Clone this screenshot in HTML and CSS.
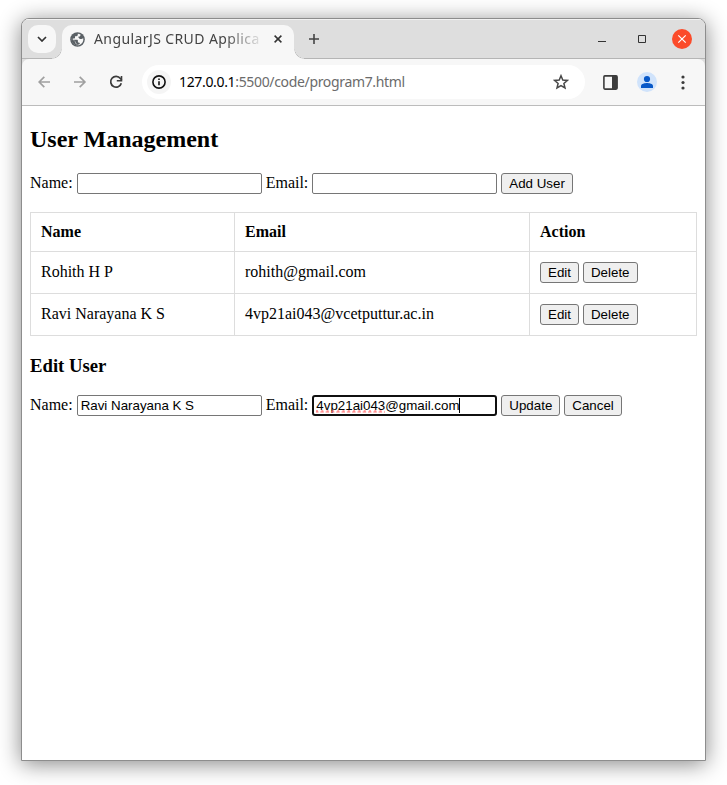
FILE: index.html
```html
<!DOCTYPE html>
<html lang="en">
<head>
<meta charset="utf-8">
<title>AngularJS CRUD Application</title>
<link rel="stylesheet" href="styles.css">
</head>
<body>
<div class="window">
  <header class="tabstrip">
    <div class="tab-search">
      <svg width="10" height="6" viewBox="0 0 10 6"><path d="M1 1l4 4 4-4" fill="none" stroke="#333" stroke-width="1.7"/></svg>
    </div>
    <div class="tab">
      <svg class="globe" width="15" height="15" viewBox="0 0 15 15"><circle cx="7.5" cy="7.5" r="7.3" fill="#5a6065"/><path d="M7.800 1.700v1.100c0 .8-.6 1.400-1.400 1.400H5v1.500c0 .4-.3.700-.7.700H2.900v1.400h4.300c.4 0 .7.300.7.700v2.100h.7c.7 0 1.200.4 1.400 1-.9.900-1.800 1.500-2.800 1.600v-1.200c-.8 0-1.400-.6-1.400-1.400v-.700L1.800 6.400C1.300 9.900 4 13.300 7.500 13.300c3.200 0 5.800-2.600 5.800-5.800 0-.4 0-.8-.1-1.200l-1.600.8H9.900L8.500 5.700V4.400h1.400l.8-1.700c-.9-.6-1.900-1-2.900-1z" fill="#f7f7f7"/><path d="M1.600 6.200L5.400 10v.700c0 .8.600 1.400 1.400 1.400v1.300C3 13 1 9.500 1.600 6.200z" fill="#5a6065"/></svg>
      <span class="tab-title">AngularJS CRUD Applica</span>
      <svg class="tab-close" width="8" height="8" viewBox="0 0 8 8"><path d="M.6.6l6.800 6.800M7.400.6L.6 7.400" stroke="#333" stroke-width="1.500"/></svg>
    </div>
    <svg class="new-tab" width="10" height="10" viewBox="0 0 10 10"><path d="M5 0v10M0 5h10" stroke="#444" stroke-width="1.600"/></svg>
    <div class="controls">
      <svg width="8" height="8" viewBox="0 0 8 8"><path d="M0 6.500h8" stroke="#333"/></svg>
      <svg width="8" height="8" viewBox="0 0 8 8"><path d="M.5.5h7v7h-7z" fill="none" stroke="#333"/></svg>
      <svg width="20" height="20" viewBox="0 0 20 20"><circle cx="10" cy="10" r="10" fill="#fb4b2a"/><path d="M6.300 6.300l7.400 7.400M13.700 6.300l-7.400 7.400" stroke="#fff" stroke-width="1.200"/></svg>
    </div>
  </header>
  <div class="toolbar-back">
  <nav class="toolbar">
    <svg class="back" width="13" height="12" viewBox="0 0 13 12"><path d="M12 6H1.300M6.300.8L1.100 6l5.200 5.200" fill="none" stroke="#a0a0a0" stroke-width="1.700"/></svg>
    <svg class="forward" width="13" height="12" viewBox="0 0 13 12"><path d="M0 6h10.700M5.700.8L10.900 6l-5.200 5.200" fill="none" stroke="#a0a0a0" stroke-width="1.700"/></svg>
    <svg class="reload" width="14" height="14" viewBox="0 0 14 14"><path d="M12.300 8.200A5.400 5.400 0 1 1 11.400 3.500L12.700 5" fill="none" stroke="#3c3c3c" stroke-width="1.700"/><path d="M12.500 1v4.800H7.800" fill="none" stroke="#3c3c3c" stroke-width="1.600"/></svg>
    <div class="omnibox">
      <span class="site-info"><svg width="14" height="14" viewBox="0 0 14 14"><circle cx="7" cy="7" r="6.100" fill="none" stroke="#111" stroke-width="1.600"/><path d="M7 6.200v4M7 3.500v1.500" stroke="#111" stroke-width="1.600"/></svg></span>
      <span class="url"><b>127.0.0.1</b>:5500/code/program7.html</span>
      <svg class="star" width="16" height="16" viewBox="0 0 16 16"><path d="M8 1.700l1.800 4.300 4.600.4-3.500 3 1.100 4.600L8 11.600 4 14l1.100-4.600-3.500-3 4.600-.4z" fill="none" stroke="#484848" stroke-width="1.500"/></svg>
    </div>
    <svg class="panel" width="15" height="15" viewBox="0 0 15 15"><rect x=".9" y=".9" width="13.200" height="13.200" rx="1" fill="none" stroke="#3c3c3c" stroke-width="1.600"/><path d="M9 .9h5v13.200H9z" fill="#3c3c3c"/></svg>
    <svg class="profile" width="20" height="20" viewBox="0 0 20 20"><circle cx="10" cy="10" r="10" fill="#d0e3fb"/><circle cx="10" cy="7" r="3.100" fill="#0758c8"/><path d="M4 16v-2c0-2.200 4-3 6-3s6 .8 6 3v2z" fill="#0758c8"/></svg>
    <svg class="more" width="4" height="15" viewBox="0 0 4 15"><g fill="#3c3c3c"><circle cx="2" cy="2" r="1.600"/><circle cx="2" cy="7.500" r="1.600"/><circle cx="2" cy="13" r="1.600"/></g></svg>
  </nav>
  </div>
  <main class="page">
    <h2>User Management</h2>
    <form class="form-row">
      <label><span class="caption">Name:</span> <input type="text"></label>
      <label><span class="caption">Email:</span> <input type="text"></label>
      <button type="button">Add User</button>
    </form>
    <table>
      <colgroup><col class="col-name"><col class="col-email"><col></colgroup>
      <tr><th>Name</th><th>Email</th><th>Action</th></tr>
      <tr><td class="text">Rohith H P</td><td class="text">rohith@gmail.com</td><td><button>Edit</button> <button>Delete</button></td></tr>
      <tr><td class="text">Ravi Narayana K S</td><td class="text">4vp21ai043@vcetputtur.ac.in</td><td><button>Edit</button> <button>Delete</button></td></tr>
    </table>
    <h3>Edit User</h3>
    <form class="form-row">
      <label><span class="caption">Name:</span> <input type="text" value="Ravi Narayana K S"></label>
      <label><span class="caption">Email:</span> <span class="field"><input class="active" type="text" value="4vp21ai043@gmail.com"><svg class="squiggle" width="69" height="3"><path d="M0 1h69" stroke="#f44" stroke-width="1" stroke-dasharray="2 3.300"/><path d="M0 2h69" stroke="#f77" stroke-width="1" stroke-dasharray="3.500 1.800" stroke-dashoffset="1"/></svg><i class="caret"></i></span></label>
      <button type="button">Update</button>
      <button type="button">Cancel</button>
    </form>
  </main>
</div>
</body>
</html>
```
FILE: styles.css
```css
* { box-sizing: border-box; }
body {
  margin: 0;
  padding: 18px 21px 24px;
  background: #fff;
  overflow: hidden;
}
svg { display: block; flex: none; }
.window {
  width: 685px;
  height: 743px;
  border: 1px solid #8d8d8d;
  border-radius: 8px 8px 0 0;
  background: #fff;
  box-shadow: 0 3px 22px rgba(0, 0, 0, .48);
  overflow: hidden;
}
.tabstrip {
  display: flex;
  align-items: center;
  height: 40px;
  padding-left: 6px;
  background: #dedede;
  box-shadow: inset 0 1px #f2f2f2, inset 0 -1px #b5b5b5;
}
.tab-search {
  display: flex;
  align-items: center;
  justify-content: center;
  width: 28px;
  height: 28px;
  border-radius: 10px;
  background: #f7f7f7;
}
.tab {
  position: relative;
  display: flex;
  align-items: center;
  align-self: flex-end;
  width: 232px;
  height: 34px;
  margin-left: 6px;
  padding: 0 12px 6px 9px;
  border-radius: 10px 10px 0 0;
  background: #f7f7f7;
}
.tab::before,
.tab::after {
  content: "";
  position: absolute;
  bottom: 0;
  width: 10px;
  height: 10px;
}
.tab::before {
  left: -10px;
  background: radial-gradient(circle at 0 0, transparent 9px, #b5b5b5 9px, #f7f7f7 10px);
}
.tab::after {
  right: -10px;
  background: radial-gradient(circle at 100% 0, transparent 9px, #b5b5b5 9px, #f7f7f7 10px);
}
.globe { margin-left: -1px; }
.tab-title {
  width: 172px;
  margin-left: 9px;
  white-space: nowrap;
  color: #444;
  font: 14px/20px "Noto Sans", sans-serif;
  letter-spacing: .4px;
  -webkit-mask-image: linear-gradient(90deg, #000 76%, transparent 99%);
  mask-image: linear-gradient(90deg, #000 76%, transparent 99%);
}
.tab-close { margin-left: auto; }
.new-tab { margin-left: 15px; }
.controls {
  display: flex;
  align-items: center;
  margin-left: auto;
  padding-right: 13px;
}
.controls svg + svg { margin-left: 32px; }
.controls svg:last-child { margin-left: 26px; }
.toolbar-back { background: #dedede; }
.toolbar {
  display: flex;
  align-items: center;
  height: 47px;
  padding-left: 16px;
  border-bottom: 1px solid #bcbcbc;
  border-radius: 7px 7px 0 0;
  background: #f7f7f7;
}
.forward { margin-left: 23px; }
.reload { margin-left: 22px; }
.omnibox {
  display: flex;
  align-items: center;
  width: 443px;
  height: 34px;
  margin-left: 19px;
  padding: 0 16px 0 5px;
  border-radius: 17px;
  background: #fff;
}
.site-info {
  display: flex;
  align-items: center;
  justify-content: center;
  width: 24px;
  height: 24px;
  border-radius: 50%;
  background: #f5f5f5;
}
.url {
  margin-left: 8px;
  color: #6b6b6b;
  font: 14px/20px "Noto Sans", sans-serif;
  letter-spacing: -.34px;
}
.url b { color: #000; font-weight: 400; }
.star { margin-left: auto; }
.panel { margin-left: 18px; }
.profile { margin-left: 19px; }
.more { margin-left: 24px; }
.page {
  padding: 0 8px;
  color: #000;
  font: 16px/18px "Liberation Serif", serif;
}
h2 { margin: 20px 0; font-size: 24px; line-height: 27px; }
h3 { margin: 19px 0 18px; font-size: 18.72px; line-height: 22px; }
.form-row { display: flex; gap: 4px; height: 21px; }
label { display: flex; align-items: flex-start; gap: 4px; white-space: nowrap; }
.caption { line-height: 19px; }
input {
  display: block;
  width: 185px;
  height: 21px;
  margin: 0;
  padding: 1px 3px;
  border: 1px solid #767676;
  border-radius: 2px;
  background: #fff;
  color: #000;
  font: 13.333px "Liberation Sans", sans-serif;
  outline: none;
}
.field { position: relative; }
.active { padding: 0 2px; border: 2px solid #101010; border-radius: 3px; }
.squiggle { position: absolute; left: 4px; top: 15px; }
.caret { position: absolute; left: 147px; top: 3px; width: 1px; height: 15px; background: #000; }
button {
  height: 21px;
  margin: 0;
  padding: 1px 7px;
  border: 1px solid #767676;
  border-radius: 3px;
  background: #efefef;
  color: #000;
  font: 13.333px "Liberation Sans", sans-serif;
}
table {
  width: 667px;
  margin-top: 18px;
  border-collapse: collapse;
  table-layout: fixed;
}
.col-name { width: 204px; }
.col-email { width: 295px; }
th, td { height: 42px; padding: 0 10px; border: 1px solid #ddd; text-align: left; }
th { height: 39px; }
td.text { padding-bottom: 2px; }
td button { vertical-align: middle; }
```
